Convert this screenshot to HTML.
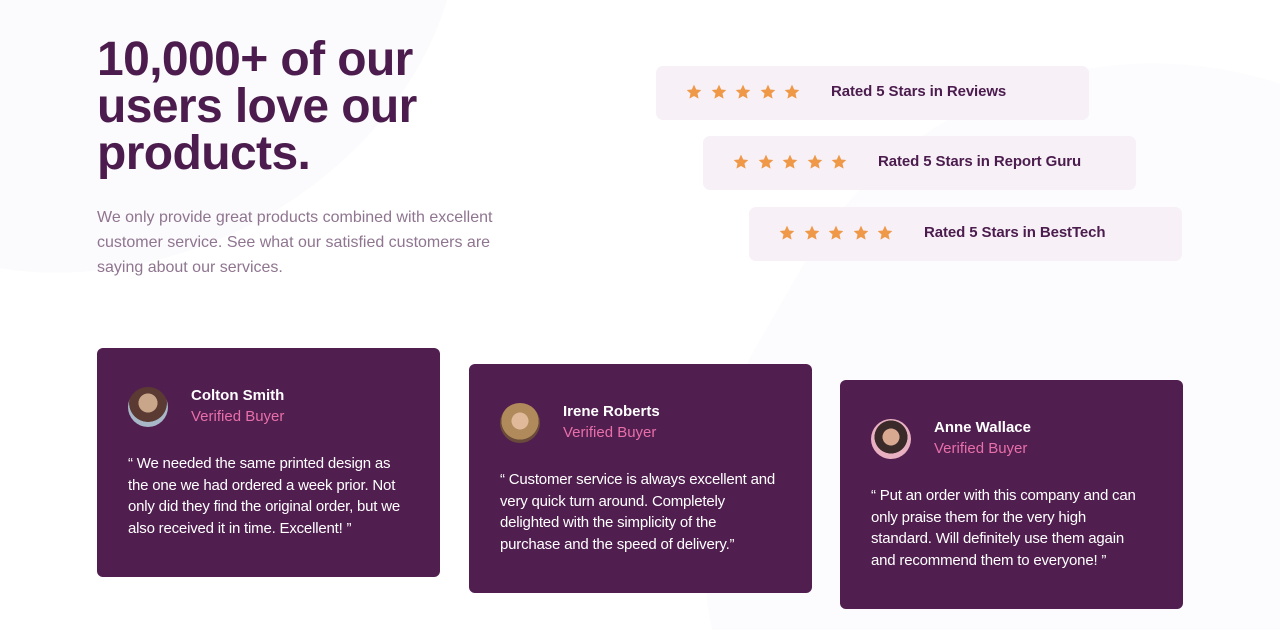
<!DOCTYPE html>
<html style="width:1280px;height:630px;overflow:hidden"><head><meta charset="utf-8"><style>
*{margin:0;padding:0;box-sizing:border-box}
body{width:1280px;height:630px;overflow:hidden;background:#fff;position:relative;font-family:"Liberation Sans",sans-serif}
.clip{position:absolute;left:0;top:0;width:1280px;height:630px;overflow:hidden}
.bg1{position:absolute;left:-250px;top:-330px;width:720px;height:590px;background:#fbfafc;border-radius:50%;transform:rotate(-25deg)}
.bg2{position:absolute;left:720px;top:80px;width:900px;height:900px;background:#fcfbfd;border-radius:45%;transform:rotate(30deg)}
h1{position:absolute;left:97px;top:36px;font-size:48px;line-height:47px;color:#4b1c4d;font-weight:bold;letter-spacing:-0.6px}
.p{position:absolute;left:97px;top:205px;width:420px;font-size:16px;line-height:25px;color:#8f7590}
.r{position:absolute;width:433px;height:54px;background:#f7f1f7;border-radius:7px}
.st{position:absolute;left:30px;top:18px;display:flex;gap:8.5px}
.r b{position:absolute;left:175px;top:17px;font-size:15px;color:#4b1c4d;letter-spacing:-0.1px}
.c{position:absolute;width:343px;height:229px;background:#501e4f;border-radius:6px;color:#fff}
.av{position:absolute;left:31px;top:39px;width:40px;height:40px;border-radius:50%;background:radial-gradient(circle at 50% 40%,#c9a58a 0 30%,#5b3a33 31% 60%,#a8b8c8 61%)}
.n{position:absolute;left:94px;top:39px;font-size:15px;font-weight:bold}
.v{position:absolute;left:94px;top:60px;font-size:15px;color:#e86fa9}
.q{position:absolute;left:31px;top:105px;width:276px;font-size:15px;line-height:21.5px;letter-spacing:-0.2px}
</style></head><body>
<div class="clip"><div class="bg1"></div><div class="bg2"></div></div>
<h1>10,000+ of our<br>users love our<br>products.</h1>
<div class="p">We only provide great products combined with excellent customer service. See what our satisfied customers are saying about our services.</div>
<div class="r" style="left:656px;top:66px"><div class="st">
<svg width="16" height="16" viewBox="0 0 24 24"><path fill="#ee9848" d="M12 1l3.3 7.2 7.7.8-5.8 5.3 1.7 7.7L12 18l-6.9 4 1.7-7.7L1 9l7.7-.8z"/></svg><svg width="16" height="16" viewBox="0 0 24 24"><path fill="#ee9848" d="M12 1l3.3 7.2 7.7.8-5.8 5.3 1.7 7.7L12 18l-6.9 4 1.7-7.7L1 9l7.7-.8z"/></svg><svg width="16" height="16" viewBox="0 0 24 24"><path fill="#ee9848" d="M12 1l3.3 7.2 7.7.8-5.8 5.3 1.7 7.7L12 18l-6.9 4 1.7-7.7L1 9l7.7-.8z"/></svg><svg width="16" height="16" viewBox="0 0 24 24"><path fill="#ee9848" d="M12 1l3.3 7.2 7.7.8-5.8 5.3 1.7 7.7L12 18l-6.9 4 1.7-7.7L1 9l7.7-.8z"/></svg><svg width="16" height="16" viewBox="0 0 24 24"><path fill="#ee9848" d="M12 1l3.3 7.2 7.7.8-5.8 5.3 1.7 7.7L12 18l-6.9 4 1.7-7.7L1 9l7.7-.8z"/></svg>
</div><b>Rated 5 Stars in Reviews</b></div>
<div class="r" style="left:703px;top:136px"><div class="st">
<svg width="16" height="16" viewBox="0 0 24 24"><path fill="#ee9848" d="M12 1l3.3 7.2 7.7.8-5.8 5.3 1.7 7.7L12 18l-6.9 4 1.7-7.7L1 9l7.7-.8z"/></svg><svg width="16" height="16" viewBox="0 0 24 24"><path fill="#ee9848" d="M12 1l3.3 7.2 7.7.8-5.8 5.3 1.7 7.7L12 18l-6.9 4 1.7-7.7L1 9l7.7-.8z"/></svg><svg width="16" height="16" viewBox="0 0 24 24"><path fill="#ee9848" d="M12 1l3.3 7.2 7.7.8-5.8 5.3 1.7 7.7L12 18l-6.9 4 1.7-7.7L1 9l7.7-.8z"/></svg><svg width="16" height="16" viewBox="0 0 24 24"><path fill="#ee9848" d="M12 1l3.3 7.2 7.7.8-5.8 5.3 1.7 7.7L12 18l-6.9 4 1.7-7.7L1 9l7.7-.8z"/></svg><svg width="16" height="16" viewBox="0 0 24 24"><path fill="#ee9848" d="M12 1l3.3 7.2 7.7.8-5.8 5.3 1.7 7.7L12 18l-6.9 4 1.7-7.7L1 9l7.7-.8z"/></svg>
</div><b>Rated 5 Stars in Report Guru</b></div>
<div class="r" style="left:749px;top:207px"><div class="st">
<svg width="16" height="16" viewBox="0 0 24 24"><path fill="#ee9848" d="M12 1l3.3 7.2 7.7.8-5.8 5.3 1.7 7.7L12 18l-6.9 4 1.7-7.7L1 9l7.7-.8z"/></svg><svg width="16" height="16" viewBox="0 0 24 24"><path fill="#ee9848" d="M12 1l3.3 7.2 7.7.8-5.8 5.3 1.7 7.7L12 18l-6.9 4 1.7-7.7L1 9l7.7-.8z"/></svg><svg width="16" height="16" viewBox="0 0 24 24"><path fill="#ee9848" d="M12 1l3.3 7.2 7.7.8-5.8 5.3 1.7 7.7L12 18l-6.9 4 1.7-7.7L1 9l7.7-.8z"/></svg><svg width="16" height="16" viewBox="0 0 24 24"><path fill="#ee9848" d="M12 1l3.3 7.2 7.7.8-5.8 5.3 1.7 7.7L12 18l-6.9 4 1.7-7.7L1 9l7.7-.8z"/></svg><svg width="16" height="16" viewBox="0 0 24 24"><path fill="#ee9848" d="M12 1l3.3 7.2 7.7.8-5.8 5.3 1.7 7.7L12 18l-6.9 4 1.7-7.7L1 9l7.7-.8z"/></svg>
</div><b>Rated 5 Stars in BestTech</b></div>

<div class="c" style="left:97px;top:348px"><div class="av"></div><div class="n">Colton Smith</div><div class="v">Verified Buyer</div>
<div class="q">“ We needed the same printed design as the one we had ordered a week prior. Not only did they find the original order, but we also received it in time. Excellent! ”</div></div>
<div class="c" style="left:469px;top:364px"><div class="av" style="background:radial-gradient(circle at 50% 45%,#e0b89a 0 28%,#b08a5a 29% 62%,#6a4a3a 63%)"></div><div class="n">Irene Roberts</div><div class="v">Verified Buyer</div>
<div class="q">“ Customer service is always excellent and very quick turn around. Completely delighted with the simplicity of the purchase and the speed of delivery.”</div></div>
<div class="c" style="left:840px;top:380px"><div class="av" style="background:radial-gradient(circle at 50% 45%,#d9a890 0 28%,#3a2a2a 29% 55%,#e8b0c0 56%)"></div><div class="n">Anne Wallace</div><div class="v">Verified Buyer</div>
<div class="q">“ Put an order with this company and can only praise them for the very high standard. Will definitely use them again and recommend them to everyone! ”</div></div>
</body></html>
